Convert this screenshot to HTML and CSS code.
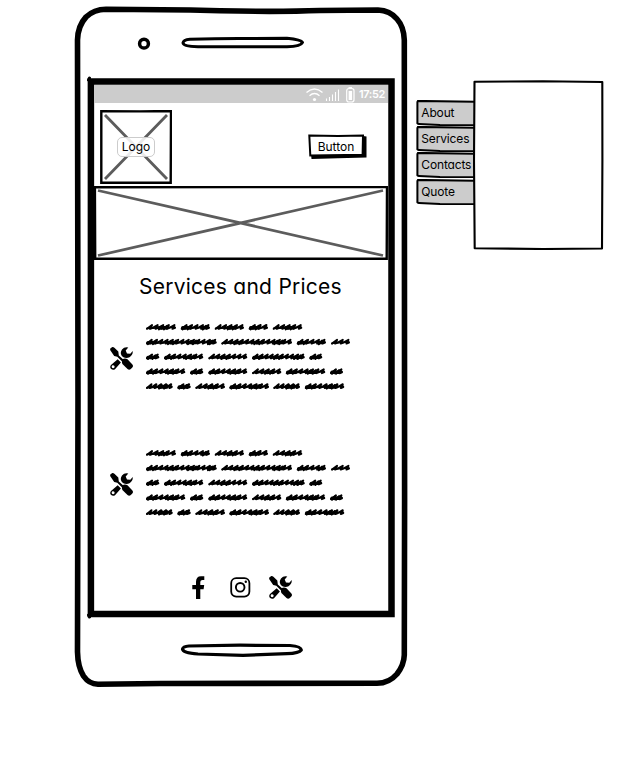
FILE: index.html
```html
<!DOCTYPE html>
<html lang="en">
<head>
<meta charset="utf-8">
<title>Services and Prices</title>
<link rel="stylesheet" href="styles.css">
</head>
<body>
<svg class="defs" aria-hidden="true">
  <symbol id="tools" viewBox="0 0 23 23">
    <path d="M.3 3.200Q-.2 1.800.9 1L2.400.1Q3.400-.1 4.400.8L8.300 4.600 8.800 8.400 14.100 13.200 12.600 15 7.300 9.700 4.200 9Z"/>
    <path d="M12.900 12Q15.200 10.800 17.500 12.300L22.400 17.500Q23.600 19 22.300 20.500L20.500 22.200Q19.200 23.200 17.500 22L12.400 17Q11.200 14.300 12.900 12Z"/>
    <path d="M18.300.5Q14.500-.5 12 2.400 10.300 4.800 11 7.300 11.500 9.200 13.400 10.300 16.500 11.800 19.500 10.300 23.200 8 22.700 3.900L20.300 6.800 17 6.500 15.700 3.400Z"/>
    <path fill-rule="evenodd" d="M7.700 12.300 1 18Q-.5 20 .9 21.800 2.900 23.600 5 22.200L10.900 15.600ZM3.200 18.200a1.500 1.500 0 1 1-.1 3 1.500 1.500 0 0 1 .1-3Z"/>
  </symbol>
</svg>
<main class="board">
  <section class="phone">
    <svg class="phone-frame" viewBox="0 0 340 696" aria-hidden="true">
      <path d="M36 9.300Q90 9.300 150 10.800 210 12 250 10.500L308 10Q320 10.500 327 19 334 27 334.300 40L334.600 500 334.300 655Q334 665 327 674 319 683.300 307 683.300L90 683.500 28 684.300Q19 684 13.500 676 7.800 667 7.500 652L8 400 7.500 40Q7.800 26 16 17 24 9.500 36 9.300Z" stroke-width="5.600"/>
      <path d="M20.900 81.500H321.500V614H20.900Z" stroke-width="6.500" stroke-linejoin="miter"/>
      <path d="M18.500 80L19.500 78M18.500 615L19.500 617" stroke-width="3" stroke-linecap="round"/>
      <circle cx="74" cy="43.700" r="4.400" stroke-width="3.500"/>
      <path d="M120 39.300Q150 38.300 178 38.500L217 38.300Q231 39.500 232.500 42.500 231 46.300 217 46.700L128 46.700Q113 46.300 113 42.700 113.500 40 120 39.300Z" stroke-width="3"/>
      <path d="M119 646L170 645.200 220 645.500Q231 646.300 231.300 650 229 653.300 217 653.700L173 655.300 128 654Q113 653 112.500 649 113 646.500 119 646Z" stroke-width="3.200"/>
    </svg>
    <div class="screen">
      <div class="status">
        <svg class="status-icons" viewBox="0 0 50 17" fill="none" stroke="#fff" aria-hidden="true">
          <path d="M1.500 6.500Q9.500-.5 17.500 6.500M4.500 9.700Q9.500 5.500 14.500 9.700" stroke-width="1.400"/>
          <circle cx="9.500" cy="13.500" r="1.600" fill="#fff" stroke="none"/>
          <path d="M21.500 15V12.500M24.500 15V11M27.500 15V8.500M30.500 15V6M33.500 15V3.500" stroke-width="1.100"/>
          <rect x="41.700" y="2.500" width="7.300" height="13.500" rx="2.200" stroke-width="1.200"/>
          <path d="M43.500 1.700H47" stroke-width="1.300"/>
          <rect x="43.600" y="5" width="3.500" height="9" fill="#fff" stroke="none"/>
        </svg>
        <span class="time">17:52</span>
      </div>
      <header class="top">
        <div class="logo">
          <svg class="cross" viewBox="0 0 72 74" aria-hidden="true">
            <path class="edge" d="M1.300 1.200L40 1.400 71 1 70.700 72.700 1.300 72.700Z"/>
            <path class="diagonal" d="M5 5L67 69M67 5L5 69"/>
          </svg>
          <span class="logo-label">Logo</span>
        </div>
        <button class="button">
          <svg class="button-shape" viewBox="0 0 59 26" aria-hidden="true">
            <path d="M3 20L54 19 55 2 58.500 2.500V23.500L30 24.300 3.500 25Z"/>
            <path class="face" d="M1.300 1.500L30 2 55 1.500 54.600 20.700 2.300 21.500Z"/>
          </svg>
          <span class="button-label">Button</span>
        </button>
      </header>
      <div class="banner">
        <svg viewBox="0 0 294 74" aria-hidden="true">
          <path class="edge" d="M.9 1.300L150 1.100 293 1 292.700 72.800 1.200 72.800Z"/>
          <path class="diagonal" d="M4 4.500L289 69.500M289 4.500L4 69.500"/>
        </svg>
      </div>
      <h1 class="title">Services and Prices</h1>
      <article class="service"><svg class="tool"><use href="#tools"/></svg><svg class="scribble" viewBox="0 0 210 74"></svg></article>
      <article class="service"><svg class="tool"><use href="#tools"/></svg><svg class="scribble" viewBox="0 0 210 74"></svg></article>
      <footer class="social">
        <svg class="facebook" viewBox="0 0 13 23"><path d="M4 23V13.200H.3V9H4V6Q4 .3 9 .3H12.300V4H10.500Q8.300 4 8.300 6.100V9H12.200L11.600 13.200H8.300V23Z"/></svg>
        <svg class="instagram" viewBox="0 0 21 21" fill="none" stroke="#000"><rect x="1.200" y="1.200" width="18.200" height="18.400" rx="5" stroke-width="1.800"/><circle cx="10.200" cy="10.300" r="4.300" stroke-width="1.900"/><circle cx="15.800" cy="4.800" r="1.200" fill="#000" stroke="none"/></svg>
        <svg class="tool"><use href="#tools"/></svg>
      </footer>
    </div>
  </section>
  <aside class="tabs">
    <nav class="tab-list">
      <a class="tab"><svg viewBox="0 0 59 26"><path d="M59 1.700L2 .9 1.400 2V22.500Q1 23.800 3 23.900L24 24.900 59 25.300"/></svg><span>About</span></a>
      <a class="tab"><svg viewBox="0 0 59 26"><path d="M59 1.700L2 .9 1.400 2V22.500Q1 23.800 3 23.900L24 24.900 59 25.300"/></svg><span>Services</span></a>
      <a class="tab"><svg viewBox="0 0 59 26"><path d="M59 1.700L2 .9 1.400 2V22.500Q1 23.800 3 23.900L24 24.900 59 25.300"/></svg><span>Contacts</span></a>
      <a class="tab"><svg viewBox="0 0 59 26"><path d="M59 1.700L2 .9 1.400 2V22.500Q1 23.800 3 23.900L24 24.900 59 25.300"/></svg><span>Quote</span></a>
    </nav>
    <svg class="panel" viewBox="0 0 131 170" aria-hidden="true"><path d="M1.500 1.800L70 1.200 129.300 2 129.400 80 129 168.500 70 169 1.700 168.200 1 80Z"/></svg>
  </aside>
</main>
<script src="scribble.js"></script>
</body>
</html>
```
FILE: styles.css
```css
* { box-sizing: border-box; }
body {
  margin: 0;
  background: #fff;
  color: #000;
  font-family: Inter, "Liberation Sans", sans-serif;
  font-feature-settings: "cv11";
}
svg { display: block; }
.defs { width: 0; height: 0; position: absolute; }
.board {
  display: flex;
  align-items: flex-start;
  width: 628px;
  height: 764px;
  padding-left: 70px;
}
.phone {
  position: relative;
  width: 340px;
  height: 696px;
  padding: 85px 21px 0 24px;
}
.phone-frame {
  position: absolute;
  inset: 0;
  width: 340px;
  height: 696px;
  fill: none;
  stroke: #000;
  stroke-linejoin: round;
}
.screen { position: relative; height: 526px; }
.status {
  display: flex;
  align-items: center;
  justify-content: flex-end;
  gap: 4px;
  height: 18px;
  margin-right: 1px;
  padding-right: 3px;
  background: #ccc;
}
.status-icons { width: 50px; height: 17px; }
.time {
  width: 26px;
  color: #fff;
  font-size: 11px;
  font-weight: 600;
  line-height: 18px;
  letter-spacing: -.4px;
}
.top {
  display: flex;
  justify-content: space-between;
  height: 83px;
  padding: 7px 22px 0 6px;
}
.logo {
  display: grid;
  place-items: center;
  width: 72px;
  height: 74px;
}
.logo > * { grid-area: 1 / 1; }
.cross { width: 72px; height: 74px; }
.edge { fill: none; stroke: #000; stroke-width: 2.4; }
.diagonal { fill: none; stroke: #5c5c5c; stroke-width: 2.8; }
.logo-label {
  position: relative;
  width: 38px;
  height: 20px;
  margin-bottom: 1px;
  border: 1px solid #ccc;
  border-radius: 5px;
  background: rgba(255, 255, 255, .87);
  font-size: 12px;
  line-height: 17px;
  text-align: center;
}
.button {
  display: grid;
  width: 59px;
  height: 26px;
  margin-top: 24px;
  padding: 0;
  border: 0;
  background: none;
  color: #000;
  font: inherit;
  font-feature-settings: inherit;
}
.button > * { grid-area: 1 / 1; }
.button-shape { width: 59px; height: 26px; }
.face { fill: #fff; stroke: #000; stroke-width: 2; }
.button-label {
  position: relative;
  padding-right: 3px;
  font-size: 12px;
  line-height: 25px;
}
.banner svg { width: 294px; height: 74px; }
.title {
  height: 62px;
  margin: 0;
  padding: 13px 2px 0 0;
  font-size: 21px;
  font-weight: 400;
  line-height: 28px;
  letter-spacing: .25px;
  text-align: center;
}
.service {
  display: flex;
  gap: 13px;
  height: 126px;
  padding-left: 16px;
}
.service .tool { margin-top: 25px; }
.tool { width: 23px; height: 23px; }
.scribble {
  width: 210px;
  height: 74px;
  fill: none;
  stroke: #000;
  stroke-linecap: round;
  stroke-linejoin: round;
}
.social {
  display: flex;
  align-items: center;
  height: 23px;
  margin-top: 2px;
  padding-left: 98px;
}
.facebook { width: 13px; height: 23px; }
.instagram { width: 21px; height: 21px; margin: 0 18px 0 25px; }
.tabs { display: flex; padding: 80px 0 0 6px; }
.tab-list {
  display: flex;
  flex-direction: column;
  padding-top: 20px;
}
.tab { display: grid; width: 57px; height: 26.2px; }
.tab > * { grid-area: 1 / 1; }
.tab svg { width: 59px; height: 26px; }
.tab path { fill: #ccc; stroke: #000; stroke-width: 2; }
.tab span {
  position: relative;
  padding-left: 5.300px;
  font-size: 12px;
  line-height: 26px;
  letter-spacing: -.15px;
}
.panel { position: relative; width: 131px; height: 170px; }
.panel path {
  fill: #fff;
  stroke: #000;
  stroke-width: 2.1;
  stroke-linejoin: round;
}
```
FILE: scribble.js
```js
// Start and end of each scribbled word, line by line.
const lines = [
  [[0, 30], [34.700, 64], [68.700, 98], [102.700, 122], [126.700, 156.300]],
  [[0, 70.700], [75.300, 146], [150.700, 180], [185, 204]],
  [[0, 13.300], [18, 57.300], [62.300, 101.300], [106, 158.700], [163.300, 176.300]],
  [[0, 39.300], [44, 57.300], [62.300, 101.300], [106, 135.300], [139.700, 179.300], [184, 197]],
  [[0, 26.700], [31.300, 44.700], [49.300, 79], [83.300, 123], [127.300, 154], [158.700, 198.300]]
];

const draw = (svg, d, width) => {
  const path = document.createElementNS("http://www.w3.org/2000/svg", "path");
  path.setAttribute("d", d);
  path.setAttribute("stroke-width", width);
  svg.append(path);
};

document.querySelectorAll(".scribble").forEach(svg => {
  lines.forEach((words, row) => {
    const y = 5 + row * 14.8;
    words.forEach(([start, end], index) => {
      const first = start + 1;
      const last = end - 1;
      const steps = Math.max(2, Math.round((last - first) / 5.2));
      const step = (last - first) / steps;
      let d = `M${first} ${y + 1.8}`;
      for (let i = 0; i < steps; i++) {
        const x = first + i * step;
        d += `L${x + step * .9} ${y - 2}L${x + step * .55} ${y + 1.8}L${x + step} ${y + .8}`;
      }
      draw(svg, d, 2);
      draw(svg, `M${first} ${y + 1.4}L${last} ${y + .2}`, 1.6);
      const offset = (row + index) % 2 ? 1 : 12;
      for (let x = first + (last - first < 14 ? 1 : offset); x < last - 5; x += 20) {
        const stop = Math.min(x + 8, last - 3);
        draw(svg, `M${x} ${y + .8}L${stop} ${y + .8}`, 3.4);
        draw(svg, `M${x} ${y + 2.4}L${x + 3} ${y - 1}M${stop - 3} ${y + 2.4}L${stop} ${y - 1.2}`, 2);
      }
    });
  });
});
```
